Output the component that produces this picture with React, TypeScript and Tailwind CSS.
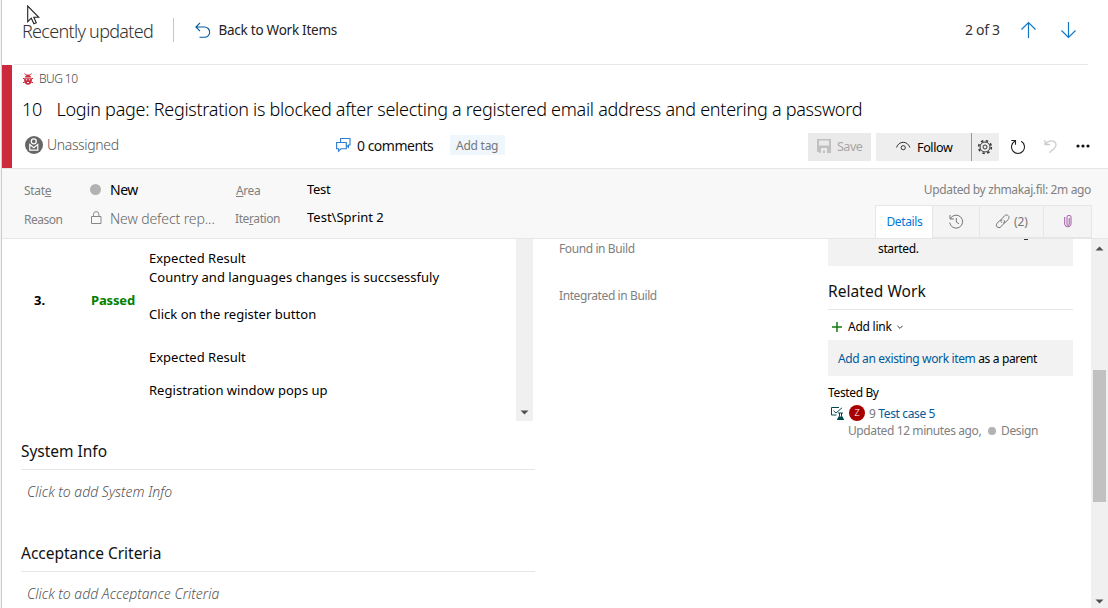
import type { ReactNode } from "react";

function Txt({ className = "", children }: { className?: string; children: ReactNode }) {
  return <span className={`block shrink-0 whitespace-nowrap leading-5 ${className}`}>{children}</span>;
}

function Cursor() {
  return (
    <svg className="absolute left-[27px] top-[5px]" width="13" height="20" viewBox="0 0 13 20">
      <path d="M.7 1v15.6l3.6-3.4 2.6 5.6 2.4-1.1-2.5-5.4h5z" fill="#fff" stroke="#222" strokeWidth="1.1" />
    </svg>
  );
}

function TopBar() {
  return (
    <div className="relative ml-3 flex h-[65px] w-[1074px] shrink-0 border-b border-[#e6e6e6]">
      <Txt className="ml-2 mt-[21px] w-[151px] text-[18px] font-light tracking-[-0.7px] text-[#333]">Recently updated</Txt>
      <div className="mt-[18px] h-6 w-px bg-[#c8c8c8]" />
      <svg className="ml-[21px] mt-[22px]" width="16" height="17" viewBox="0 0 16 17" fill="none" stroke="#005a9e" strokeWidth="1.1">
        <path d="M5 .8.9 5 5 9.2M.9 5h8.6a5 5 0 0 1 0 10.300H4.500" />
      </svg>
      <Txt className="ml-[7.500px] mt-5 w-[746.500px] text-[13.5px] tracking-[-0.25px] text-[#222]">Back to Work Items</Txt>
      <Txt className="mt-5 w-[56px] text-[14px] tracking-[-0.3px] text-[#333]">2 of 3</Txt>
      <svg className="mt-[21px]" width="16" height="18" viewBox="0 0 16 18" fill="none" stroke="#1278c4" strokeWidth="1.2">
        <path d="M7.500 17V1.500M.5 8.500l7-7 7 7" />
      </svg>
      <svg className="ml-6 mt-[21px]" width="16" height="18" viewBox="0 0 16 18" fill="none" stroke="#1278c4" strokeWidth="1.2">
        <path d="M7.500 1v15.500M.5 9.500l7 7 7-7" />
      </svg>
    </div>
  );
}

function BugIcon() {
  return (
    <svg className="mt-2" width="10" height="12" viewBox="0 0 10 12">
      <path d="M1.500.5c.5 1.300 1.500 1.600 3.500 1.600S8 1.800 8.500.5" fill="none" stroke="#cc293d" />
      <path d="M1.800 4.500C2 3 3.500 2 5 2s3 1 3.200 2.500z" fill="#cc293d" />
      <path d="M1.300 5.200h7.400c.7 3.300-.5 6.500-3.700 6.500S.6 8.500 1.300 5.200z" fill="#cc293d" />
      <path d="M0 5.500h1.500M0 9.500h1.500M10 5.500H8.500M10 9.500H8.500" stroke="#cc293d" />
      <path d="M2.800 6.800h1.400M5.800 6.800h1.400M4 9.500h2" stroke="#fff" />
    </svg>
  );
}

function Header() {
  return (
    <div className="flex h-[103px] shrink-0">
      <div className="w-[10px] bg-[#cc293d]" />
      <div className="flex w-[1096px] flex-col">
        <div className="flex h-[28px] pl-[11px]">
          <BugIcon />
          <Txt className="ml-[6px] mt-[4px] text-[12px] font-light tracking-[-0.55px] text-[#444]">BUG 10</Txt>
        </div>
        <div className="flex h-10 pl-[10px] pt-[6px]">
          <Txt className="w-[34.500px] text-[18px] font-light tracking-[-0.3px] text-[#000]">10</Txt>
          <Txt className="text-[18px] font-light tracking-[-0.275px] text-[#000]">
            Login page: Registration is blocked after selecting a registered email address and entering a password
          </Txt>
        </div>
        <div className="flex h-[28px] pl-[13px]">
          <svg className="mt-[3px]" width="18" height="18" viewBox="0 0 18 18">
            <circle cx="9" cy="9" r="9" fill="#666" />
            <circle cx="8.800" cy="5.300" r="2.500" fill="none" stroke="#fff" strokeWidth="1.300" />
            <path d="M4.800 8.500v5.700h8V8.500L8.800 11.800z" fill="none" stroke="#fff" strokeWidth="1.200" />
          </svg>
          <Txt className="ml-1 mt-[2px] w-[289px] text-[14px] font-light tracking-[-0.35px] text-[#555]">Unassigned</Txt>
          <svg className="mt-[5px]" width="15" height="15" viewBox="0 0 15 15" fill="none" stroke="#2b7cd3" strokeWidth="1.100">
            <path d="M4.600 4.500v-4h9.400v6.500h-1.500v2.300L10.300 7" />
            <path d="M.6 4.500h9.700v6.300H5L2.500 13.200v-2.400H.6z" />
          </svg>
          <Txt className="ml-[6px] mt-[3px] w-[93px] text-[14px] tracking-[-0.5px] text-[#111]">0 comments</Txt>
          <div className="mt-[2px] h-5 w-[55px] bg-[#eff6fc] pl-[6px]">
            <Txt className="mt-px text-[12px] tracking-[-0.25px] text-[#777]">Add tag</Txt>
          </div>
          <div className="ml-[303px] flex h-7 w-[63px] bg-[#eaeaea] pl-[9px]">
            <svg className="mt-[6px]" width="14" height="14" viewBox="0 0 14 14">
              <path d="M0 0h14v14H3L0 12.500z" fill="#c0c0c0" />
              <path d="M2 1.500h10v5H2zM4 9h6v5H8v-2.500H6V14H4z" fill="#eaeaea" />
            </svg>
            <Txt className="ml-[6px] mt-1 text-[12.500px] tracking-[-0.5px] text-[#a6a6a6]">Save</Txt>
          </div>
          <div className="ml-[5px] flex h-7 w-[123px] bg-[#eee]">
            <svg className="ml-5 mt-2" width="15" height="12" viewBox="0 0 15 12" fill="none" stroke="#333">
              <path d="M.6 6.500C1.500 3.200 4.200 1.300 7.200 1.300s5.700 1.900 6.600 5.200" />
              <circle cx="7.200" cy="6.700" r="2.100" />
            </svg>
            <Txt className="ml-[6px] mt-[5px] w-[54px] text-[12.500px] tracking-[-0.35px] text-black">Follow</Txt>
            <div className="w-px bg-[#999]" />
            <svg className="ml-[5px] mt-[6px]" width="16" height="16" viewBox="0 0 16 16" fill="none" stroke="#333">
              <circle cx="8" cy="8" r="5" />
              <circle cx="8" cy="8" r="2" />
              <circle cx="8" cy="8" r="6.400" strokeWidth="1.500" strokeDasharray="2.500 2.526" />
            </svg>
          </div>
          <svg className="ml-[11px] mt-[6px]" width="16" height="16" viewBox="0 0 16 16" fill="none" stroke="#222" strokeWidth="1.100">
            <path d="M4.800 2.300a6.500 6.500 0 1 0 6.400 0M1.300 1.500h4.200v4.200" />
          </svg>
          <svg className="ml-[18px] mt-[6px]" width="14" height="15" viewBox="0 0 14 15" fill="none" stroke="#ccc" strokeWidth="1.300">
            <path d="M1 1v4.500h5M1.200 5.300C3 2.800 5 1.800 7.300 1.800c3.100 0 4.700 2 4.700 4.200 0 3-3 4.500-6.500 7.700" />
          </svg>
          <svg className="ml-[18px] mt-[11px]" width="14" height="4" viewBox="0 0 14 4" fill="#111">
            <circle cx="2" cy="2" r="1.600" />
            <circle cx="7" cy="2" r="1.600" />
            <circle cx="12" cy="2" r="1.600" />
          </svg>
        </div>
      </div>
    </div>
  );
}

function Tabs() {
  return (
    <div className="-mb-px ml-auto mt-[5px] flex h-[33px] w-[217px] border border-b-0 border-[#e6e6e6] bg-[#f4f4f4]">
      <div className="w-[56px] bg-white pl-[10.500px] pt-[6px]">
        <Txt className="text-[12px] tracking-[-0.4px] text-[#0078d7]">Details</Txt>
      </div>
      <div className="flex w-[47px] justify-center border-b border-l border-[#e6e6e6] pt-2">
        <svg width="15" height="15" viewBox="0 0 15 15" fill="none" stroke="#777">
          <path d="M1 1v4h4M1.300 4.800a6.500 6.500 0 1 1-.6 3.800M7.300 4v4l2.700 1.800" />
        </svg>
      </div>
      <div className="flex w-16 border-b border-l border-[#e6e6e6] pl-[15px] pt-[6px]">
        <svg className="mt-[2px]" width="16" height="15" viewBox="0 0 16 15" fill="none" stroke="#777">
          <path d="M6.800 8.700C5.500 7.400 5.600 6 6.800 4.800l2.600-2.900c1.200-1.300 2.800-1.100 3.800-.2s1.100 2.500 0 3.700L11 7.900c-.8.900-1.800 1.100-2.800.8" />
          <path d="M8.700 5.800c1.200 1.200 1.200 2.700 0 3.900L6 12.700c-1.200 1.200-2.800 1.200-3.900.2s-1-2.600.1-3.700l2.100-2.300c.9-.9 1.900-1.100 2.900-.7" />
        </svg>
        <Txt className="ml-[3px] text-[12px] tracking-[-0.1px] text-[#777]">(2)</Txt>
      </div>
      <div className="flex flex-1 justify-center border-b border-l border-[#e6e6e6] pt-[9px]">
        <svg width="8" height="13" viewBox="0 0 8 13" fill="none" stroke="#a05aa5">
          <path d="M5.200 3v6.300a1.100 1.100 0 0 1-2.200 0V2.200a1.700 1.700 0 0 1 4 0v7a3.200 3.200 0 0 1-6.300 0V2" />
        </svg>
      </div>
    </div>
  );
}

function Fields() {
  return (
    <div className="flex h-[71px] shrink-0 border-b border-t border-[#e6e6e6] bg-[#f8f8f8]">
      <div className="w-[66px] pl-[22px] pt-[12px] text-[12px] text-[#808080]">
        <Txt className="tracking-[-0.3px]">Stat<u>e</u></Txt>
        <Txt className="mt-[9px] tracking-[-0.5px]">Reason</Txt>
      </div>
      <div className="w-[167px] pl-[22px] pt-[11px]">
        <div className="flex">
          <div className="mt-[4px] h-[11px] w-[11px] rounded-full bg-[#b2b2b2]" />
          <Txt className="ml-[9px] text-[14px] tracking-[-0.5px] text-black">New</Txt>
        </div>
        <div className="mt-[9px] flex">
          <svg className="ml-px mt-[2px]" width="11" height="13" viewBox="0 0 11 13" fill="none" stroke="#888">
            <path d="M.5 5.500h9.500v7H.5zM2.500 5.500V3.300a2.700 2.700 0 0 1 5.400 0v2.200" />
          </svg>
          <Txt className="ml-2 text-[14px] font-light tracking-[-0.1px] text-[#666]">New defect rep...</Txt>
        </div>
      </div>
      <div className="w-[72px] pt-[12px] text-[12px] tracking-[-0.4px] text-[#808080]">
        <Txt className="ml-px"><u>A</u>rea</Txt>
        <Txt className="mt-[8px]">Ite<u>r</u>ation</Txt>
      </div>
      <div className="w-[300px] pt-[10px] text-[13px] text-black">
        <Txt className="tracking-[-0.3px]">Test</Txt>
        <Txt className="mt-2">Test\Sprint 2</Txt>
      </div>
      <div className="flex w-[485px] flex-col pt-[11px]">
        <Txt className="mr-px self-end text-[12px] tracking-[-0.36px] text-[#808080]">Updated by zhmakaj.fil: 2m ago</Txt>
        <Tabs />
      </div>
    </div>
  );
}

function Arrow({ className, up = false }: { className: string; up?: boolean }) {
  return (
    <svg className={className} width="9" height="5" viewBox="0 0 9 5" fill="#505050">
      <path d={up ? "M4.500.5 8.500 4.500H.5z" : "M.5.5h8L4.500 4.500z"} />
    </svg>
  );
}

function ReproSteps() {
  return (
    <div className="flex h-[182px] w-[514px] text-[13px] tracking-[0.035px] text-black">
      <Txt className="ml-[13px] mt-[51px] w-[57px] font-bold">3.</Txt>
      <Txt className="mt-[51px] w-[58px] font-bold tracking-[-0.15px] text-[#008000]">Passed</Txt>
      <div className="w-[367px] pt-[9px]">
        <Txt className="tracking-[0px]">Expected Result</Txt>
        <Txt className="-mt-px">Country and languages changes is succsessfuly</Txt>
        <Txt className="mt-[17px]">Click on the register button</Txt>
        <Txt className="mt-[23px] tracking-[0px]">Expected Result</Txt>
        <Txt className="mt-[13px]">Registration window pops up</Txt>
      </div>
      <div className="flex w-[17px] flex-col items-center justify-end bg-[#f0f0f0] pb-[6px]">
        <Arrow className="" />
      </div>
    </div>
  );
}

function Section({ title, hint }: { title: string; hint: string }) {
  return (
    <div className="h-[102px] pt-[20px]">
      <div className="h-[29px] w-[514px] border-b border-[#e6e6e6]">
        <Txt className="text-[15.500px] tracking-[-0.02px] text-[#111]">{title}</Txt>
      </div>
      <Txt className="ml-[6px] mt-[12px] text-[14px] font-light italic text-[#555]">{hint}</Txt>
    </div>
  );
}

function RelatedWork() {
  return (
    <div className="w-[245px] text-[12px] tracking-[-0.36px] text-black">
      <div className="relative h-[27px] overflow-hidden bg-[#f2f2f2] pl-[50px] pt-0">
        <div className="absolute left-[196px] top-0 h-px w-1 bg-[#333]" />
        <Txt>started.</Txt>
      </div>
      <div className="h-[44px] border-b border-[#e6e6e6] pt-[15px]">
        <Txt className="text-[15.500px] tracking-[0.05px] text-[#111]">Related Work</Txt>
      </div>
      <div className="flex h-[30px] pl-1 pt-[7px]">
        <svg className="mt-[5px]" width="10" height="10" viewBox="0 0 10 10" stroke="#107c10" strokeWidth="1.500">
          <path d="M5 0v10M0 5h10" />
        </svg>
        <Txt className="ml-[6px] tracking-[-0.25px]">Add link</Txt>
        <svg className="ml-[5px] mt-[8px]" width="6" height="5" viewBox="0 0 6 5" fill="none" stroke="#333">
          <path d="m.4.8 2.600 2.600L5.600.8" />
        </svg>
      </div>
      <div className="h-9 bg-[#f2f2f2] pl-[10px] pt-[9px]">
        <Txt><span className="text-[#005a9e]">Add an existing work item</span> as a parent</Txt>
      </div>
      <Txt className="mt-[7px]">Tested By</Txt>
      <div className="mt-px flex pl-[3px]">
        <svg className="mt-[3px]" width="13" height="14" viewBox="0 0 13 14" fill="none" stroke="#004b50">
          <path d="M8 .5H.5v7.500h5M2.500 3.800l2.500 2.200L11 .8M7 6h5M8.500 6v3L6.500 12.500h6L10.500 9V6" />
          <path d="M8 9.500h3l2 3.500H6z" fill="#004b50" stroke="none" />
        </svg>
        <div className="ml-[5px] mt-[1px] h-4 w-4 rounded-full bg-[#a80000] text-center text-[9px] font-light leading-4 text-white">Z</div>
        <Txt className="ml-1 text-[#777]">9 <span className="text-[#005a9e]">Test case 5</span></Txt>
      </div>
      <div className="-mt-[3px] flex pl-5 text-[#808080]">
        <Txt className="w-[140px] tracking-[-0.4px]">Updated 12 minutes ago,</Txt>
        <div className="mr-[5px] mt-[6px] h-2 w-2 rounded-full bg-[#b2b2b2]" />
        <Txt>Design</Txt>
      </div>
    </div>
  );
}

export default function App() {
  return (
    <div className="relative flex h-[608px] w-[1108px] overflow-hidden bg-white font-['Noto_Sans','Open_Sans',sans-serif]">
      <div className="w-[2px] shrink-0 border-r border-[#ccc] bg-[#f4f4f4]" />
      <div className="flex w-[1106px] shrink-0 flex-col">
        <TopBar />
        <Header />
        <Fields />
        <div className="flex h-[369px] overflow-hidden">
          <div className="ml-[19px] w-[514px]">
            <ReproSteps />
            <Section title="System Info" hint="Click to add System Info" />
            <Section title="Acceptance Criteria" hint="Click to add Acceptance Criteria" />
          </div>
          <div className="ml-6 w-[269px] text-[12px] tracking-[-0.4px] text-[#808080]">
            <Txt>Found in Build</Txt>
            <Txt className="mt-[27px]">Integrated in Build</Txt>
          </div>
          <RelatedWork />
          <div className="ml-[18px] flex h-full w-[17px] flex-col items-center bg-[#f0f0f0]">
            <Arrow up className="mt-[7px]" />
            <div className="mt-[119px] h-[132px] w-[13px] bg-[#c1c1c1]" />
            <Arrow className="mt-[97px]" />
          </div>
        </div>
      </div>
      <Cursor />
    </div>
  );
}
